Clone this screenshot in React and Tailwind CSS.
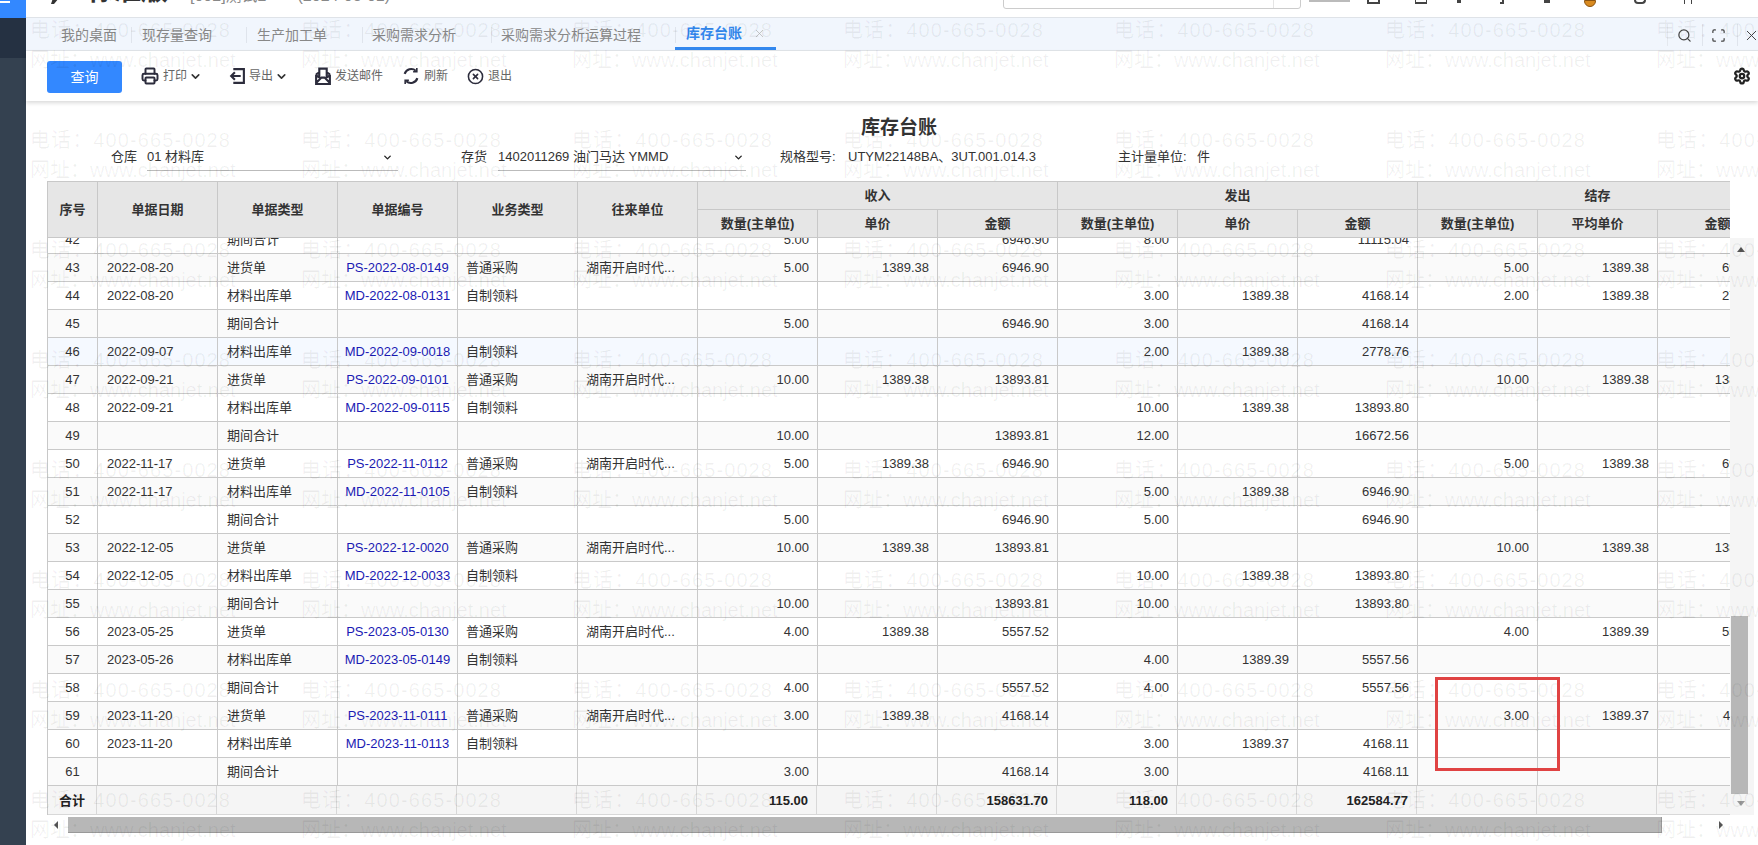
import React from "react";
import { ChevronDown, CircleX, Printer, Scan, Search, Settings, X } from "lucide-react";

const ph = "湖南开启时代...";
const rows = [
	[42, "", "期间合计", "", "", "", "5.00", "", "6946.90", "8.00", "", "11115.04", "", "", ""],
	[43, "2022-08-20", "进货单", "PS-2022-08-0149", "普通采购", ph, "5.00", "1389.38", "6946.90", "", "", "", "5.00", "1389.38", "6946.90"],
	[44, "2022-08-20", "材料出库单", "MD-2022-08-0131", "自制领料", "", "", "", "", "3.00", "1389.38", "4168.14", "2.00", "1389.38", "2778.76"],
	[45, "", "期间合计", "", "", "", "5.00", "", "6946.90", "3.00", "", "4168.14", "", "", ""],
	[46, "2022-09-07", "材料出库单", "MD-2022-09-0018", "自制领料", "", "", "", "", "2.00", "1389.38", "2778.76", "", "", ""],
	[47, "2022-09-21", "进货单", "PS-2022-09-0101", "普通采购", ph, "10.00", "1389.38", "13893.81", "", "", "", "10.00", "1389.38", "13893.81"],
	[48, "2022-09-21", "材料出库单", "MD-2022-09-0115", "自制领料", "", "", "", "", "10.00", "1389.38", "13893.80", "", "", ""],
	[49, "", "期间合计", "", "", "", "10.00", "", "13893.81", "12.00", "", "16672.56", "", "", ""],
	[50, "2022-11-17", "进货单", "PS-2022-11-0112", "普通采购", ph, "5.00", "1389.38", "6946.90", "", "", "", "5.00", "1389.38", "6946.90"],
	[51, "2022-11-17", "材料出库单", "MD-2022-11-0105", "自制领料", "", "", "", "", "5.00", "1389.38", "6946.90", "", "", ""],
	[52, "", "期间合计", "", "", "", "5.00", "", "6946.90", "5.00", "", "6946.90", "", "", ""],
	[53, "2022-12-05", "进货单", "PS-2022-12-0020", "普通采购", ph, "10.00", "1389.38", "13893.81", "", "", "", "10.00", "1389.38", "13893.81"],
	[54, "2022-12-05", "材料出库单", "MD-2022-12-0033", "自制领料", "", "", "", "", "10.00", "1389.38", "13893.80", "", "", ""],
	[55, "", "期间合计", "", "", "", "10.00", "", "13893.81", "10.00", "", "13893.80", "", "", ""],
	[56, "2023-05-25", "进货单", "PS-2023-05-0130", "普通采购", ph, "4.00", "1389.38", "5557.52", "", "", "", "4.00", "1389.39", "5557.56"],
	[57, "2023-05-26", "材料出库单", "MD-2023-05-0149", "自制领料", "", "", "", "", "4.00", "1389.39", "5557.56", "", "", ""],
	[58, "", "期间合计", "", "", "", "4.00", "", "5557.52", "4.00", "", "5557.56", "", "", ""],
	[59, "2023-11-20", "进货单", "PS-2023-11-0111", "普通采购", ph, "3.00", "1389.38", "4168.14", "", "", "", "3.00", "1389.37", "4168.11"],
	[60, "2023-11-20", "材料出库单", "MD-2023-11-0113", "自制领料", "", "", "", "", "3.00", "1389.37", "4168.11", "", "", ""],
	[61, "", "期间合计", "", "", "", "3.00", "", "4168.14", "3.00", "", "4168.11", "", "", ""],
];

const tiles = Array.from({ length: 56 }, (_, i) => i);
const cols = [50, 120, 120, 120, 120, 120, 120, 120, 120, 120, 120, 120, 120, 120, 120];

function Cols({ first = 50 }) {
	return (
		<colgroup>
			{cols.map((w, i) => (
				<col key={i} style={{ width: i === 0 ? first : w }} />
			))}
		</colgroup>
	);
}

function Watermark() {
	return (
		<div className="absolute inset-0 z-20 pointer-events-none overflow-hidden">
			<div className="flex flex-wrap w-[1950px] pl-[30px] pt-[15px]">
				{tiles.map((i) => (
					<div key={i} className="w-[271px] h-[110px] text-[20px] leading-[30px] text-black/6 whitespace-nowrap">
						<div className="tracking-[1.1px]">电话：400-665-0028</div>
						<div>网址：www.chanjet.net</div>
					</div>
				))}
			</div>
		</div>
	);
}

function Sidebar() {
	return (
		<div className="w-[26px] shrink-0 flex flex-col bg-[#344150]">
			<div className="h-[18px] bg-[#3388ff] overflow-hidden">
				<div className="w-[10px] h-[2px] bg-white mt-[1px]"></div>
			</div>
			<div className="h-[40px] bg-[#253142]"></div>
		</div>
	);
}

function TopBar() {
	return (
		<div className="h-[18px] border-b border-[#dfe3e8] bg-white overflow-hidden flex items-end pb-[13px] shrink-0">
			<svg width="10" height="6" viewBox="0 0 10 6" className="ml-[23px]">
				<path d="M4 0h6L5 6H2z" fill="#333" />
			</svg>
			<span className="ml-[28px] text-[27px] font-bold leading-[27px] text-[#333] -mb-[1px]">标准版</span>
			<span className="ml-[22px] text-[16px] leading-[16px] text-[#888]">[002]测试2</span>
			<span className="ml-[31px] text-[16px] leading-[16px] text-[#888]">(2024-08-01)</span>
			<div className="relative ml-[613px] w-[298px] h-[30px] border border-[#ccc] rounded-[3px] -mb-[5px] bg-white">
				<span className="absolute right-[26px] top-0 h-full w-px bg-[#e5e5e5]"></span>
			</div>
			<div className="ml-[8px] w-[41px] h-[2px] bg-[#bbb] mb-[2px]"></div>
			<div className="flex h-[5px] items-start mb-[-1px] ml-[17px]">
				<div className="w-[13px] h-[4px] border-x-2 border-b-2 border-[#444]"></div>
				<div className="ml-[35px] w-[12px] h-[4px] border-b-2 border-x border-[#444]"></div>
				<div className="ml-[30px] w-[4px] h-[3px] bg-[#444]"></div>
				<div className="ml-[39px] w-[4px] h-[4px] border-b-2 border-r-2 border-[#444]"></div>
				<div className="ml-[40px] w-[6px] h-[3px] bg-[#444]"></div>
				<div className="ml-[34px] w-[12px] h-[7px] rounded-b-full bg-[#d98a1f] border border-[#8a5310]"></div>
				<div className="ml-[38px] w-[12px] h-[4px] rounded-b-full border-x-2 border-b-2 border-[#444]"></div>
				<div className="ml-[38px] w-[8px] h-[4px] border-x border-[#444]"></div>
			</div>
		</div>
	);
}

function Sep() {
	return <span className="w-px h-[16px] bg-[#dfe4ec]"></span>;
}

function TabBar() {
	const tabs = [
		["现存量查询", "pl-[10px] pr-[34px]"],
		["生产加工单", "pl-[10px] pr-[35px]"],
		["采购需求分析", "pl-[9px] pr-[35px]"],
		["采购需求分析运算过程", "pl-[9px] pr-[34px]"],
	];
	return (
		<div className="h-[33px] shrink-0 bg-[#f1f6fd] border-b border-[#e2e6ea] flex items-center text-[14px] text-[#888] pt-[2px]">
			<span className="ml-[35px] mr-[14px]">我的桌面</span>
			<Sep />
			{tabs.map(([t, p]) => (
				<React.Fragment key={t}>
					<span className={p}>{t}</span>
					<Sep />
				</React.Fragment>
			))}
			<div className="h-full w-[101px] border-b-[3px] border-[#3388ee] flex items-center pl-[11px] text-[#3388ee] font-bold -ml-px">
				库存台账
				<X size={13} strokeWidth={1.2} className="ml-[11px] text-[#aaa]" />
			</div>
			<div className="ml-auto flex items-center">
				<span className="w-px h-[22px] bg-[#e4e8ee]"></span>
				<Search size={15} strokeWidth={2} className="ml-[9px] text-[#444]" />
				<span className="w-px h-[22px] bg-[#dfe4ec] ml-[10px]"></span>
				<Scan size={15} strokeWidth={2} className="ml-[8px] text-[#444]" />
				<span className="w-px h-[22px] bg-[#dfe4ec] ml-[11px]"></span>
				<X size={17} strokeWidth={1.4} className="ml-[5px] mr-[-2px] text-[#444]" />
			</div>
		</div>
	);
}

function Chev() {
	return <ChevronDown size={13} strokeWidth={3} className="ml-[2px] text-[#333]" />;
}

function Toolbar() {
	return (
		<div className="h-[50px] shrink-0 bg-white shadow-[0_2px_4px_rgba(0,0,0,0.15)] flex items-center pl-[21px] text-[12px] text-[#666] relative z-10">
			<button className="w-[75px] h-[32px] rounded-[3px] bg-[#3388ff] text-white text-[14px] mt-[2px]">查询</button>
			<div className="flex items-center ml-[19px]">
				<Printer size={18} strokeWidth={2.6} className="text-[#2c2c3c]" />
				<span className="ml-[4px]">打印</span>
				<Chev />
			</div>
			<div className="flex items-center ml-[26px]">
				<svg width="18" height="18" viewBox="0 0 17 17" fill="none" stroke="#2c2c3c" strokeWidth="2">
					<path d="M5 2h10v13H5M12 8.500H3M6.500 5 3 8.500 6.500 12" />
				</svg>
				<span className="ml-[3px]">导出</span>
				<Chev />
			</div>
			<div className="flex items-center ml-[26px]">
				<svg width="18" height="18" viewBox="0 0 17 17" fill="none" stroke="#2c2c3c" strokeWidth="2">
					<path d="M2 7v9h13V7M2 7l3-2M15 7l-3-2M5 9V1.500h7V9M2 15l5-5h3l5 5M2 8l5 3M15 8l-5 3" />
				</svg>
				<span className="ml-[3px]">发送邮件</span>
			</div>
			<div className="flex items-center ml-[19px]">
				<svg width="18" height="18" viewBox="0 0 17 17" fill="none" stroke="#2c2c3c" strokeWidth="2">
					<path d="M2.500 6.500A6.500 6.500 0 0 1 13 3.500M14.500 10.500A6.500 6.500 0 0 1 4 13.500" />
					<path d="M14 1v3.500h-3.500M3 16v-3.500h3.500" strokeWidth="1.500" />
				</svg>
				<span className="ml-[4px]">刷新</span>
			</div>
			<div className="flex items-center ml-[19px]">
				<CircleX size={17} strokeWidth={2.2} className="text-[#2c2c3c]" />
				<span className="ml-[4px]">退出</span>
			</div>
			<Settings size={18} strokeWidth={3} className="ml-auto mr-[7px] text-[#222]" />
		</div>
	);
}

function FilterRow() {
	return (
		<div className="h-[26px] flex items-start text-[13px] text-[#333] leading-[22px] pl-[85px]">
			<span className="w-[36px]">仓库</span>
			<div className="relative w-[251px] h-[25px] border-b border-[#bbb]">
				01 材料库
				<ChevronDown size={11} strokeWidth={3} className="absolute right-[5px] top-[6px] text-[#222]" />
			</div>
			<span className="w-[37px] ml-[63px]">存货</span>
			<div className="relative w-[248px] h-[25px] border-b border-[#bbb]">
				1402011269 油门马达 YMMD
				<ChevronDown size={11} strokeWidth={3} className="absolute right-[2px] top-[6px] text-[#222]" />
			</div>
			<span className="ml-[34px] w-[68px]">规格型号:</span>
			<span className="w-[270px]">UTYM22148BA、3UT.001.014.3</span>
			<span className="w-[79px]">主计量单位:</span>
			<span>件</span>
		</div>
	);
}

function HeadTable() {
	const th = "border-r border-b border-[#c8c8c8] font-bold text-[13px] text-[#333] p-0";
	return (
		<table className="table-fixed border-separate border-spacing-0 w-[1730px] bg-[#e6e6e6] border-t border-l border-[#c8c8c8]">
			<Cols />
			<thead>
				<tr className="h-[28px]">
					{["序号", "单据日期", "单据类型", "单据编号", "业务类型", "往来单位"].map((t) => (
						<th key={t} rowSpan={2} className={th}>{t}</th>
					))}
					<th colSpan={3} className={th}>收入</th>
					<th colSpan={3} className={th}>发出</th>
					<th colSpan={3} className={th}>结存</th>
				</tr>
				<tr className="h-[28px]">
					{["数量(主单位)", "单价", "金额", "数量(主单位)", "单价", "金额", "数量(主单位)", "平均单价", "金额"].map((t, i) => (
						<th key={i} className={th}>{t}</th>
					))}
				</tr>
			</thead>
		</table>
	);
}

function BodyTable() {
	const td = "border-r border-b border-[#c9c9c9] p-0 pt-[1px] whitespace-nowrap";
	return (
		<div className="h-[548px] overflow-hidden">
			<table className="table-fixed border-separate border-spacing-0 w-[1730px] text-[13px] text-[#333] border-l border-[#c8c8c8] -mt-[12px]">
				<Cols />
				<tbody>
					{rows.map((r) => (
						<tr key={r[0]} className={r[0] === 46 ? "h-[28px] bg-[#f5f9ff]" : r[0] % 2 ? "h-[28px] bg-[#fafafa]" : "h-[28px] bg-white"}>
							<td className={td + " text-center"}>{r[0]}</td>
							<td className={td + " pl-[9px]"}>{r[1]}</td>
							<td className={td + " pl-[9px]"}>{r[2]}</td>
							<td className={td + " text-center text-[#1a1ab4]"}>{r[3]}</td>
							<td className={td + " pl-[8px]"}>{r[4]}</td>
							<td className={td + " pl-[8px]"}>{r[5]}</td>
							{r.slice(6).map((v, i) => (
								<td key={i} className={td + " text-right pr-[8px]"}>{v}</td>
							))}
						</tr>
					))}
				</tbody>
			</table>
		</div>
	);
}

function FootTable() {
	const td = "border-r border-b border-[#d8d8d8] p-0 pt-[1px] pr-[8px] text-right";
	const vals = ["115.00", "", "158631.70", "118.00", "", "162584.77", "", "", ""];
	return (
		<table className="table-fixed border-separate border-spacing-0 w-[1730px] text-[13px] font-bold text-[#222] bg-[#f5f5f5] border-l border-[#c8c8c8]">
			<Cols first={49} />
			<tbody>
				<tr className="h-[29px]">
					<td className="border-r border-b border-[#d8d8d8] p-0 pt-[1px] text-center">合计</td>
					{[1, 2, 3, 4, 5].map((i) => (
						<td key={i} className={td}></td>
					))}
					{vals.map((v, i) => (
						<td key={i} className={td}>{v}</td>
					))}
				</tr>
			</tbody>
		</table>
	);
}

function HScroll() {
	return (
		<div className="h-[16px] mt-[2px] flex items-center bg-white">
			<div className="w-[21px] h-full flex items-center pl-[7px]">
				<span className="w-0 h-0 border-y-[4px] border-y-transparent border-r-[4px] border-r-[#555]"></span>
			</div>
			<div className="w-[1594px] h-full bg-[#b7b7b7] border-b border-r border-[#999]"></div>
			<div className="flex-1 flex items-center pl-[57px]">
				<span className="w-0 h-0 border-y-[4px] border-y-transparent border-l-[4px] border-l-[#555]"></span>
			</div>
		</div>
	);
}

function VScroll() {
	return (
		<div className="w-[24px] mt-[57px] h-[577px] bg-[#f5f5f5] relative">
			<span className="absolute left-[7px] top-[9px] w-0 h-0 border-x-[4px] border-x-transparent border-b-[5px] border-b-[#555]"></span>
			<div className="absolute left-[1px] top-[378px] w-[17px] h-[178px] bg-[#b7b7b7]"></div>
			<span className="absolute left-[7px] top-[563px] w-0 h-0 border-x-[4px] border-x-transparent border-t-[5px] border-t-[#999]"></span>
		</div>
	);
}

export default function App() {
	return (
		<div className="relative flex w-full h-screen overflow-hidden bg-white font-['Liberation_Sans','Noto_Sans_CJK_SC',sans-serif]">
			<Sidebar />
			<div className="flex-1 flex flex-col min-w-0">
				<TopBar />
				<TabBar />
				<Toolbar />
				<div className="pt-[13px] pb-0">
					<div className="h-[28px] pl-[14px] text-center text-[19px] leading-[28px] font-bold text-[#333]">库存台账</div>
					<div className="mt-[4px]">
						<FilterRow />
					</div>
					<div className="flex pl-[21px] mt-[9px]">
						<div className="w-[1683px] overflow-hidden">
							<HeadTable />
							<BodyTable />
							<FootTable />
							<HScroll />
						</div>
						<VScroll />
					</div>
				</div>
			</div>
			<div className="absolute left-[1435px] top-[677px] w-[125px] h-[94px] border-[3px] border-[#e04343] z-30"></div>
			<Watermark />
		</div>
	);
}
